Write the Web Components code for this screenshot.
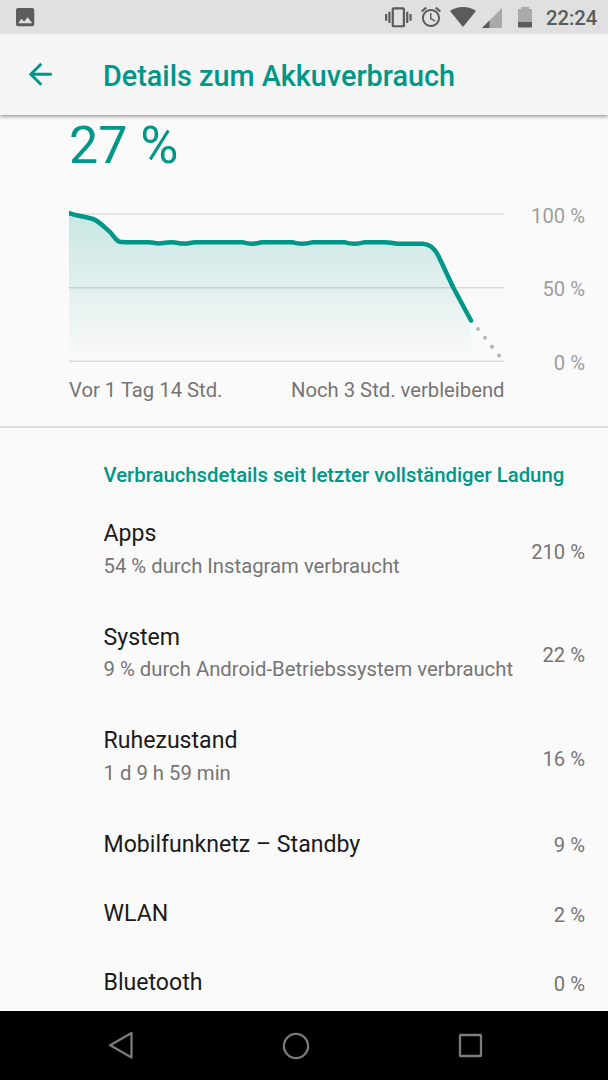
<!DOCTYPE html>
<html lang="de">
<head>
<meta charset="utf-8">
<title>Details zum Akkuverbrauch</title>
<style>
  body {
    margin: 0;
    background: #fafafa;
    font-family: Roboto, "Liberation Sans", sans-serif;
    --accent: #009688;
    --secondary: #757575;
  }
</style>
</head>
<body>
<battery-screen></battery-screen>

<script>
const icons = {
  image: { w: 24.3, h: 24.3, box: "0 0 24 24", svg: `<path d="M21 19V5c0-1.100-.9-2-2-2H5c-1.100 0-2 .9-2 2v14c0 1.100.9 2 2 2h14c1.100 0 2-.9 2-2zM8.500 13.500l2.500 3.010L14.500 12l4.500 6H5l3.500-4.500z"/>` },
  vibrate: { w: 26.7, h: 26.7, box: "0 0 24 24", svg: `<path d="M0 15h2V9H0v6zm3 2h2V7H3v10zm19-8v6h2V9h-2zm-3 8h2V7h-2v10zM16.500 3h-9C6.670 3 6 3.670 6 4.500v15c0 .83.67 1.500 1.500 1.500h9c.83 0 1.500-.67 1.500-1.500v-15c0-.83-.67-1.500-1.500-1.500zM16 19H8V5h8v14z"/>` },
  alarm: { w: 24, h: 24, box: "0 0 24 24", svg: `<path d="M22 5.720l-4.600-3.860-1.290 1.530 4.600 3.860L22 5.720zM7.880 3.390L6.600 1.860 2 5.710l1.290 1.530 4.590-3.850zM12.500 8H11v6l4.750 2.850.75-1.230-4-2.370V8zM12 4c-4.970 0-9 4.030-9 9s4.020 9 9 9c4.970 0 9-4.030 9-9s-4.030-9-9-9zm0 16c-3.870 0-7-3.130-7-7s3.130-7 7-7 7 3.130 7 7-3.130 7-7 7z"/>` },
  wifi: { w: 26, h: 20, box: "0 0 26 20", svg: `<path d="M13 20L0 4Q5.500 0 13 0T26 4z"/>` },
  signal: { w: 20, h: 20, box: "0 0 20 20", svg: `<path fill="#a9a9a9" d="M20 0v20H0z"/><path d="M7.500 12.500V20H0z"/>` },
  battery: { w: 14, h: 21, box: "0 0 14 21", svg: `<path fill="#a9a9a9" d="M3 0h8v2h2q1 0 1 1v12H0V3q0-1 1-1h2z"/><path d="M0 15h14v4.500q0 1-1 1H1q-1 0-1-1z"/>` },
  arrow: { w: 34.6, h: 34.6, box: "0 0 24 24", svg: `<path d="M20 11H7.830l5.590-5.590L12 4l-8 8 8 8 1.410-1.410L7.830 13H20v-2z"/>` },
  back: { w: 26, h: 30, box: "0 0 26 30", svg: `<path fill="none" stroke="currentColor" stroke-width="2.300" stroke-linejoin="round" d="M23.500 2v24.500L2.200 14.200z"/>` },
  home: { w: 28, h: 28, box: "0 0 28 28", svg: `<circle cx="14" cy="14" r="12.100" fill="none" stroke="currentColor" stroke-width="2.300"/>` },
  recents: { w: 25, h: 25, box: "0 0 25 25", svg: `<rect x="2" y="2" width="21" height="21" rx=".5" fill="none" stroke="currentColor" stroke-width="2.300"/>` }
};

class UiIcon extends HTMLElement {
  constructor() {
    super();
    this.attachShadow({ mode: "open" });
  }

  connectedCallback() {
    const icon = icons[this.getAttribute("name")];
    this.shadowRoot.innerHTML = /*html*/ `
    <style>
      :host { display: block; flex: none; }
      svg { display: block; fill: currentColor; }
    </style>
    <svg width="${icon.w}" height="${icon.h}" viewBox="${icon.box}">${icon.svg}</svg>`;
  }
}
customElements.define("ui-icon", UiIcon);

class StatusBar extends HTMLElement {
  constructor() {
    super();
    this.attachShadow({ mode: "open" });
    this.shadowRoot.innerHTML = /*html*/ `
    <style>
      :host {
        display: flex;
        align-items: center;
        box-sizing: border-box;
        height: 34px;
        padding: 0 10.600px 0 13.300px;
        background: #e0e0e0;
        color: #5b5b5b;
      }
      .icons { display: flex; align-items: center; margin-left: auto; }
      .alarm { margin: 0 7px 0 7.300px; }
      .signal { margin: 1px 16px 0 6px; }
      .battery { margin-right: 14px; }
      .clock { font-size: 20.3px; font-weight: 500; line-height: 24px; padding-top: 2px; }
    </style>
    <ui-icon name="image"></ui-icon>
    <div class="icons">
      <ui-icon name="vibrate"></ui-icon>
      <ui-icon class="alarm" name="alarm"></ui-icon>
      <ui-icon name="wifi"></ui-icon>
      <ui-icon class="signal" name="signal"></ui-icon>
      <ui-icon class="battery" name="battery"></ui-icon>
      <span class="clock"><slot></slot></span>
    </div>`;
  }
}
customElements.define("status-bar", StatusBar);

class AppToolbar extends HTMLElement {
  constructor() {
    super();
    this.attachShadow({ mode: "open" });
    this.shadowRoot.innerHTML = /*html*/ `
    <style>
      :host {
        display: flex;
        align-items: center;
        box-sizing: border-box;
        height: 81px;
        padding-left: 23.200px;
        background: #f5f5f5;
        color: var(--accent);
        box-shadow: 0 1px 4px rgba(0, 0, 0, .5);
        z-index: 1;
      }
      .title { margin-left: 45.200px; font-size: 28.8px; font-weight: 500; line-height: 34px; padding-top: 2px; white-space: nowrap; }
    </style>
    <ui-icon name="arrow"></ui-icon>
    <span class="title"><slot></slot></span>`;
  }
}
customElements.define("app-toolbar", AppToolbar);

class BatteryChart extends HTMLElement {
  constructor() {
    super();
    this.attachShadow({ mode: "open" });
    this.shadowRoot.innerHTML = /*html*/ `
    <style>
      :host {
        display: block;
        box-sizing: border-box;
        height: 313px;
        padding: 0 23px 0 69px;
        border-bottom: 2px solid #dcdcdc;
        color: var(--secondary);
        font-size: 20.25px;
        line-height: 24px;
        white-space: nowrap;
      }
      .level { height: 61px; line-height: 61px; font-size: 52px; color: var(--accent); }
      .graph { display: flex; justify-content: space-between; margin-top: 27px; }
      svg { display: block; overflow: visible; }
      .scale { display: flex; flex-direction: column; justify-content: space-between; box-sizing: border-box; height: 171.5px; padding-top: .6px; text-align: right; color: #9e9e9e; }
      .range { display: flex; justify-content: space-between; width: 435.500px; margin-top: 3.500px; }
    </style>
    <div class="level"><slot name="level"></slot></div>
    <div class="graph">
      <svg width="436" height="171.5" viewBox="69 203 436 171.5">
        <defs>
          <linearGradient id="fade" gradientUnits="userSpaceOnUse" x1="0" y1="213" x2="0" y2="361">
            <stop offset="0" stop-color="#009688" stop-opacity=".2"/>
            <stop offset="1" stop-color="#009688" stop-opacity="0"/>
          </linearGradient>
          <clipPath id="edge"><path d="M69 200h440v170H69z"/></clipPath>
          <path id="curve" d="M66 212.200L69 213.200Q74 215 80 216T93 219C99 221 104 227 110 232C114 236 116 241 120 241.800Q124 242.500 148 242.300Q152 242.300 155 243Q159 243.800 163 243Q172 241.600 178 243Q185 244.200 190 243Q193 242.300 196 242.300H243Q252 245 261 242.300H293Q302 245 312 242.300H345Q354 245 364 242.300H384Q392 242.500 397 243.800H423C430 244 434 248 438 255L453 287L471 320.500"/>
        </defs>
        <g stroke="#000" stroke-opacity=".13" stroke-width="1.6">
          <path d="M69 214H504.500M69 287.700H504.500M69 361.300H504.500"/>
        </g>
        <path fill="url(#fade)" d="M69 213Q74 215 80 216T93 219C99 221 104 227 110 232C114 236 116 241 120 241.800Q124 242.500 148 242.300H384L397 243.800H423C430 244 434 248 438 255L453 287L471 320.500V361H69z"/>
        <g fill="#adb9b7">
          <circle cx="478" cy="329" r="2"/>
          <circle cx="485" cy="337.800" r="2"/>
          <circle cx="492" cy="346.700" r="2"/>
          <circle cx="499.100" cy="355.600" r="2"/>
        </g>
        <use href="#curve" clip-path="url(#edge)" fill="none" stroke="#009688" stroke-width="4.500" stroke-linecap="round" stroke-linejoin="round"/>
      </svg>
      <div class="scale"><span>100 %</span><span>50 %</span><span>0 %</span></div>
    </div>
    <div class="range"><slot name="start"></slot><slot name="end"></slot></div>`;
  }
}
customElements.define("battery-chart", BatteryChart);

class UsageRow extends HTMLElement {
  constructor() {
    super();
    this.attachShadow({ mode: "open" });
  }

  connectedCallback() {
    const detail = this.getAttribute("detail");
    this.shadowRoot.innerHTML = /*html*/ `
    <style>
      :host {
        display: flex;
        align-items: center;
        justify-content: space-between;
        height: 69.3px;
        color: var(--secondary);
        font-size: 20.2px;
        line-height: 24px;
        white-space: nowrap;
      }
      :host([detail]) { height: 103.6px; }
      .name { font-size: 23.1px; line-height: 27px; color: #1b1b1b; padding-top: 1px; }
      :host([detail]) .name { padding-top: 0; }
      .detail { margin: 6.400px 0 2.600px; font-size: 20.3px; }
      .value { padding-top: 3px; }
    </style>
    <div>
      <div class="name"><slot></slot></div>
      ${detail ? `<div class="detail">${detail}</div>` : ""}
    </div>
    <div class="value">${this.getAttribute("value")}</div>`;
  }
}
customElements.define("usage-row", UsageRow);

class UsageList extends HTMLElement {
  constructor() {
    super();
    this.attachShadow({ mode: "open" });
    this.shadowRoot.innerHTML = /*html*/ `
    <style>
      :host { display: block; padding: 35.4px 23px 0 103.5px; }
      .heading { height: 35px; font-size: 20.32px; font-weight: 500; line-height: 24px; color: var(--accent); white-space: nowrap; }
    </style>
    <div class="heading"><slot name="heading"></slot></div>
    <slot></slot>`;
  }
}
customElements.define("usage-list", UsageList);

class NavBar extends HTMLElement {
  constructor() {
    super();
    this.attachShadow({ mode: "open" });
    this.shadowRoot.innerHTML = /*html*/ `
    <style>
      :host {
        display: flex;
        align-items: center;
        justify-content: space-between;
        box-sizing: border-box;
        height: 69px;
        padding: 0 125px 0 107.500px;
        background: #000;
        color: #7b7b7b;
      }
    </style>
    <ui-icon name="back"></ui-icon>
    <ui-icon name="home"></ui-icon>
    <ui-icon name="recents"></ui-icon>`;
  }
}
customElements.define("nav-bar", NavBar);

class BatteryScreen extends HTMLElement {
  constructor() {
    super();
    this.attachShadow({ mode: "open" });
    this.shadowRoot.innerHTML = /*html*/ `
    <style>
      :host { display: flex; flex-direction: column; width: 608px; height: 1080px; overflow: hidden; }
      status-bar { z-index: 2; }
      main { flex: 1; min-height: 0; overflow: hidden; }
    </style>
    <status-bar>22:24</status-bar>
    <app-toolbar>Details zum Akkuverbrauch</app-toolbar>
    <main>
      <battery-chart>
        <span slot="level">27 %</span>
        <span slot="start">Vor 1 Tag 14 Std.</span>
        <span slot="end">Noch 3 Std. verbleibend</span>
      </battery-chart>
      <usage-list>
        <span slot="heading">Verbrauchsdetails seit letzter vollständiger Ladung</span>
        <usage-row value="210 %" detail="54 % durch Instagram verbraucht">Apps</usage-row>
        <usage-row value="22 %" detail="9 % durch Android-Betriebssystem verbraucht">System</usage-row>
        <usage-row value="16 %" detail="1 d 9 h 59 min">Ruhezustand</usage-row>
        <usage-row value="9 %">Mobilfunknetz – Standby</usage-row>
        <usage-row value="2 %">WLAN</usage-row>
        <usage-row value="0 %">Bluetooth</usage-row>
      </usage-list>
    </main>
    <nav-bar></nav-bar>`;
  }
}
customElements.define("battery-screen", BatteryScreen);
</script>
</body>
</html>
